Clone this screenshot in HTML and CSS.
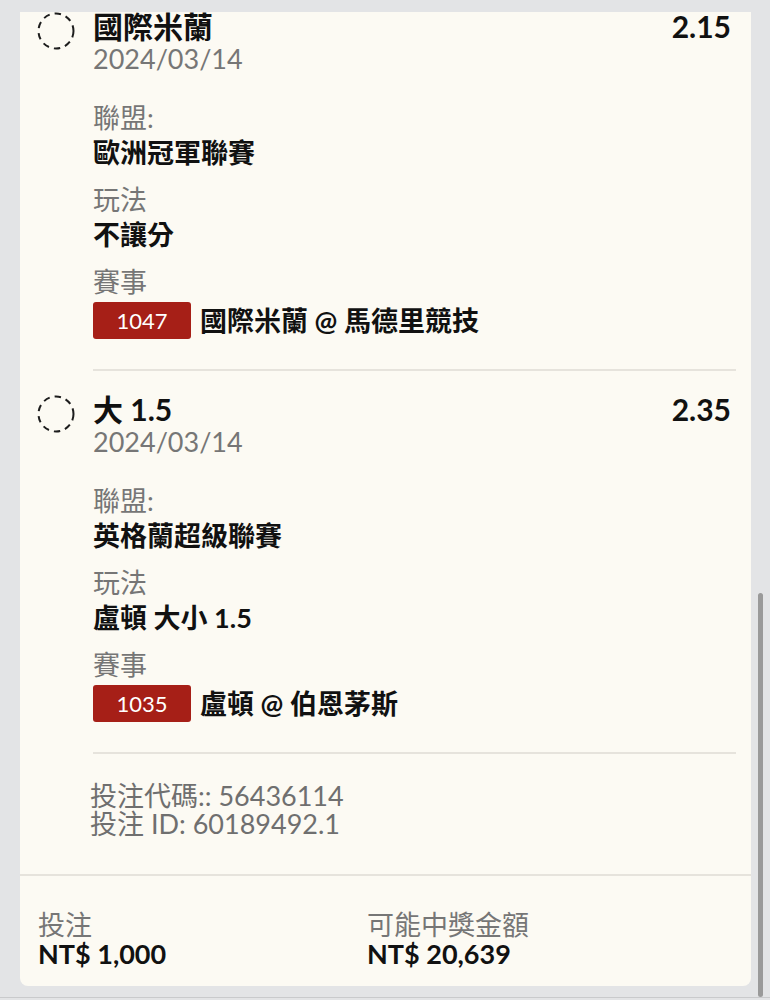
FILE: index.html
```html
<!DOCTYPE html>
<html lang="zh-Hant">
<head>
  <meta charset="UTF-8">
  <meta name="viewport" content="width=device-width, initial-scale=1.0">
  <title>投注明細</title>
  <link rel="stylesheet" href="styles.css">
</head>
<body>

<div class="page">
  <div class="slip">
    <div class="slip-body">
      <div class="bet-list">

        <div class="bet">
          <svg class="pick" width="38" height="38" viewBox="0 0 38 38">
            <circle cx="19" cy="19" r="17.5" fill="none" stroke="#1d1d1d" stroke-width="2" stroke-dasharray="6.5 5"/>
          </svg>
          <div class="bet-main">
            <div class="bet-head">
              <span class="bet-name">國際米蘭</span>
              <span class="bet-odds">2.15</span>
            </div>
            <div class="bet-date">2024/03/14</div>

            <div class="field">
              <div class="field-label">聯盟:</div>
              <div class="field-value">歐洲冠軍聯賽</div>
            </div>
            <div class="field">
              <div class="field-label">玩法</div>
              <div class="field-value">不讓分</div>
            </div>
            <div class="field">
              <div class="field-label">賽事</div>
              <div class="match">
                <span class="match-no">1047</span>
                <span class="field-value">國際米蘭 @ 馬德里競技</span>
              </div>
            </div>
          </div>
        </div>

        <div class="bet">
          <svg class="pick" width="38" height="38" viewBox="0 0 38 38">
            <circle cx="19" cy="19" r="17.5" fill="none" stroke="#1d1d1d" stroke-width="2" stroke-dasharray="6.5 5"/>
          </svg>
          <div class="bet-main">
            <div class="bet-head">
              <span class="bet-name">大 1.5</span>
              <span class="bet-odds">2.35</span>
            </div>
            <div class="bet-date">2024/03/14</div>

            <div class="field">
              <div class="field-label">聯盟:</div>
              <div class="field-value">英格蘭超級聯賽</div>
            </div>
            <div class="field">
              <div class="field-label">玩法</div>
              <div class="field-value">盧頓 大小 1.5</div>
            </div>
            <div class="field">
              <div class="field-label">賽事</div>
              <div class="match">
                <span class="match-no">1035</span>
                <span class="field-value">盧頓 @ 伯恩茅斯</span>
              </div>
            </div>
          </div>
        </div>

      </div>

      <div class="ticket-ref">
        <div>投注代碼:: 56436114</div>
        <div>投注 ID: 60189492.1</div>
      </div>
    </div>

    <div class="slip-summary">
      <div class="summary-item">
        <div class="summary-label">投注</div>
        <div class="summary-value">NT$ 1,000</div>
      </div>
      <div class="summary-item">
        <div class="summary-label">可能中獎金額</div>
        <div class="summary-value">NT$ 20,639</div>
      </div>
    </div>
  </div>

  <div class="scroll-thumb"></div>
</div>

</body>
</html>
```

FILE: styles.css
```css
body {
  margin: 0;
  padding: 0;
  background-color: #e3e4e6;
  font-family: Lato, "Noto Sans CJK TC", sans-serif;
  font-size: 27px;
  color: #111111;
}

.page {
  display: flex;
  align-items: flex-start;
  height: 997px;
  padding-left: 20px;
  border-bottom: 1px solid #c9cacc;
  overflow: hidden;
}

.slip {
  width: 731px;
  margin-top: 12px;
  background-color: #fcfaf3;
  border-radius: 0 0 8px 8px;
  overflow: hidden;
}

.slip-body {
  padding: 0 15px 36px 17px;
}

/* list is scrolled a few px up, like in the app */
.bet-list {
  margin-top: -4px;
}

.bet {
  display: grid;
  grid-template-columns: 38px 1fr;
  column-gap: 18px;
}

.pick {
  margin-top: 4px;
}

.bet-main {
  padding: 0 0 30px 0;
  border-bottom: 2px solid #e6e3dc;
}

.bet + .bet .bet-main {
  padding-top: 20px;
}

.bet + .bet .pick {
  margin-top: 24px;
}

.bet-head {
  display: flex;
  justify-content: space-between;
  line-height: 36px;
  font-size: 30px;
  font-weight: bold;
}

.bet-odds {
  margin-right: 5px;
}

.bet-date {
  color: #767676;
  line-height: 30px;
  margin-bottom: 27px;
}

.field + .field {
  margin-top: 12px;
}

.field-label {
  color: #767676;
  line-height: 33px;
}

.field-value {
  font-weight: bold;
  line-height: 37px;
}

.match {
  display: flex;
  align-items: center;
  gap: 9px;
  margin-top: 4px;
}

.match-no {
  display: inline-block;
  width: 98px;
  height: 37px;
  line-height: 37px;
  text-align: center;
  background-color: #a61f17;
  color: white;
  font-size: 22px;
  border-radius: 3px;
}

.ticket-ref {
  margin-top: 28px;
  padding-left: 53px;
  color: #6f6f6f;
  line-height: 28px;
}

.slip-summary {
  display: grid;
  grid-template-columns: 329px 1fr;
  padding: 35px 18px 17px 18px;
  border-top: 2px solid #e6e3dc;
}

.summary-label {
  color: #767676;
  line-height: 28px;
}

.summary-value {
  font-weight: bold;
  line-height: 30px;
}

.scroll-thumb {
  align-self: flex-end;
  width: 5px;
  height: 404px;
  margin-left: 7px;
  background-color: #9a9a9a;
  border-radius: 3px;
}
```
